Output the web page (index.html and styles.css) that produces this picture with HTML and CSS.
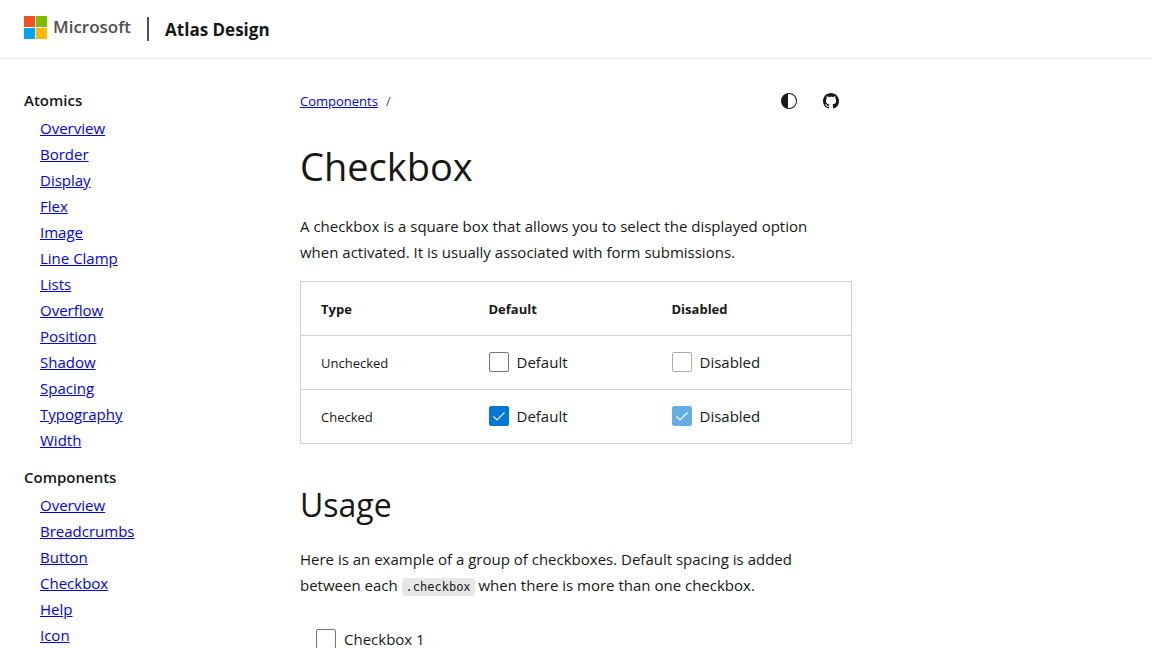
FILE: index.html
```html
<!DOCTYPE html>
<html lang="en">
<head>
<meta charset="utf-8">
<meta name="viewport" content="width=device-width, initial-scale=1">
<title>Checkbox - Atlas Design</title>
<link rel="stylesheet" href="styles.css">
</head>
<body>
<header class="site-header">
  <a class="logo" href="#">
    <svg class="logo-mark" viewBox="0 0 23 23" aria-hidden="true">
      <path fill="#f25022" d="M0 0h11v11H0z"/>
      <path fill="#80ba01" d="M12 0h11v11H12z"/>
      <path fill="#02a4ef" d="M0 12h11v11H0z"/>
      <path fill="#ffb902" d="M12 12h11v11H12z"/>
    </svg>
    <span class="logo-name">Microsoft</span>
  </a>
  <span class="divider"></span>
  <a class="site-name" href="#">Atlas Design</a>
</header>
<div class="layout">
  <nav class="sidebar" aria-label="Documentation">
    <section class="nav-group">
      <h2 class="nav-title">Atomics</h2>
      <ul class="nav-list">
        <li><a href="#">Overview</a></li>
        <li><a href="#">Border</a></li>
        <li><a href="#">Display</a></li>
        <li><a href="#">Flex</a></li>
        <li><a href="#">Image</a></li>
        <li><a href="#">Line Clamp</a></li>
        <li><a href="#">Lists</a></li>
        <li><a href="#">Overflow</a></li>
        <li><a href="#">Position</a></li>
        <li><a href="#">Shadow</a></li>
        <li><a href="#">Spacing</a></li>
        <li><a href="#">Typography</a></li>
        <li><a href="#">Width</a></li>
      </ul>
    </section>
    <section class="nav-group">
      <h2 class="nav-title">Components</h2>
      <ul class="nav-list">
        <li><a href="#">Overview</a></li>
        <li><a href="#">Breadcrumbs</a></li>
        <li><a href="#">Button</a></li>
        <li><a href="#">Checkbox</a></li>
        <li><a href="#">Help</a></li>
        <li><a href="#">Icon</a></li>
      </ul>
    </section>
  </nav>
  <main class="content">
    <div class="toolbar">
      <nav class="breadcrumbs" aria-label="Breadcrumb"><a href="#">Components</a><span class="slash">/</span></nav>
      <div class="actions">
        <button class="icon-button" type="button" aria-label="Change theme">
          <svg class="icon" viewBox="0 0 16 16" aria-hidden="true"><path fill="currentColor" fill-rule="evenodd" d="M8 0a8 8 0 1 0 0 16A8 8 0 0 0 8 0zm-1 1h1a7 7 0 0 1 0 14H7z"/></svg>
        </button>
        <a class="icon-button" href="#" aria-label="GitHub">
          <svg class="icon" viewBox="0 0 16 16" aria-hidden="true"><path fill="currentColor" d="M8 0C3.58 0 0 3.58 0 8c0 3.54 2.29 6.53 5.47 7.59.4.07.55-.17.55-.38 0-.19-.01-.82-.01-1.49-2.01.37-2.53-.49-2.69-.94-.09-.23-.48-.94-.82-1.13-.28-.15-.68-.52-.01-.53.63-.01 1.08.58 1.23.82.72 1.21 1.87.87 2.33.66.07-.52.28-.87.51-1.07-1.78-.2-3.64-.89-3.64-3.95 0-.87.31-1.59.82-2.15-.08-.2-.36-1.02.08-2.12 0 0 .67-.21 2.2.82.64-.18 1.32-.27 2-.27s1.36.09 2 .27c1.53-1.04 2.2-.82 2.2-.82.44 1.1.16 1.92.08 2.12.51.56.82 1.27.82 2.15 0 3.07-1.87 3.75-3.65 3.95.29.25.54.73.54 1.48 0 1.07-.01 1.93-.01 2.2 0 .21.15.46.55.38A8.01 8.01 0 0 0 16 8c0-4.42-3.58-8-8-8z"/></svg>
        </a>
      </div>
    </div>
    <h1 class="title">Checkbox</h1>
    <p class="text">A checkbox is a square box that allows you to select the displayed option when activated. It is usually associated with form submissions.</p>
    <table class="table">
      <colgroup><col class="col-type"><col class="col-default"><col></colgroup>
      <thead>
        <tr><th scope="col">Type</th><th scope="col">Default</th><th scope="col">Disabled</th></tr>
      </thead>
      <tbody>
        <tr>
          <td>Unchecked</td>
          <td><label class="checkbox"><input class="checkbox-input" type="checkbox"><span>Default</span></label></td>
          <td><label class="checkbox"><input class="checkbox-input" type="checkbox" disabled><span>Disabled</span></label></td>
        </tr>
        <tr>
          <td>Checked</td>
          <td><label class="checkbox"><input class="checkbox-input" type="checkbox" checked><span>Default</span></label></td>
          <td><label class="checkbox"><input class="checkbox-input" type="checkbox" checked disabled><span>Disabled</span></label></td>
        </tr>
      </tbody>
    </table>
    <h2 class="subtitle">Usage</h2>
    <p class="text">Here is an example of a group of checkboxes. Default spacing is added between each <code class="code">.checkbox</code> when there is more than one checkbox.</p>
    <div class="example">
      <label class="checkbox"><input class="checkbox-input" type="checkbox"><span>Checkbox 1</span></label>
    </div>
  </main>
</div>
</body>
</html>
```
FILE: styles.css
```css
* { box-sizing: border-box; }

body {
  margin: 0;
  background: #fff;
  color: #171717;
  font-family: "Open Sans", "Noto Sans", sans-serif;
  font-size: 15px;
  line-height: 26px;
}

a { color: #0000ee; }

.site-header {
  display: flex;
  align-items: center;
  gap: 16px;
  height: 59px;
  padding: 0 24px;
  border-bottom: 1px solid #e6e6e6;
}

.logo {
  display: flex;
  align-items: center;
  gap: 6px;
  padding-bottom: 4px;
  color: #505050;
  text-decoration: none;
}

.logo-mark { width: 23px; height: 23px; }

.logo-name { font-size: 17px; font-weight: 600; line-height: 24px; }

.divider { width: 2px; height: 24px; background: #505050; }

.site-name {
  padding-top: 2px;
  color: #171717;
  font-size: 17px;
  font-weight: 700;
  text-decoration: none;
}

.layout {
  display: grid;
  grid-template-columns: 252px minmax(0, 1fr) 252px;
  gap: 24px;
  padding: 24px;
}

.sidebar { padding-top: 4px; }

.nav-group { margin-bottom: 11px; }

.nav-title {
  margin: 0 0 2px;
  font-size: 15px;
  font-weight: 600;
}

.nav-list {
  margin: 0;
  padding-left: 16px;
  list-style: none;
}

.toolbar {
  display: flex;
  justify-content: space-between;
  align-items: center;
  height: 36px;
}

.breadcrumbs { font-size: 13px; }

.slash { margin-left: 8px; color: #505050; }

.actions { display: flex; }

.icon-button {
  display: flex;
  justify-content: center;
  align-items: center;
  width: 42px;
  height: 36px;
  padding: 0;
  border: 0;
  background: none;
  color: #171717;
}

.icon { width: 16px; height: 16px; }

.title {
  margin: 22px 0;
  font-size: 38px;
  font-weight: 400;
  line-height: 50px;
}

.text { margin: 0; padding-right: 16px; }

.table {
  width: 100%;
  margin-top: 16px;
  border: 1px solid #d2d2d2;
  border-collapse: collapse;
  table-layout: fixed;
  font-size: 13px;
}

.col-type { width: 168px; }
.col-default { width: 183px; }

.table th,
.table td {
  height: 54px;
  padding: 0 20px;
  border-bottom: 1px solid #d2d2d2;
  text-align: left;
}

.checkbox {
  display: flex;
  align-items: center;
  gap: 8px;
  padding-bottom: 2px;
  font-size: 15px;
}

.checkbox-input {
  width: 20px;
  height: 20px;
  margin: 0;
  border: 1px solid #757575;
  border-radius: 2px;
  background: #fff center / 18px 18px no-repeat;
  appearance: none;
}

.checkbox-input:checked {
  border-color: #0078d4;
  background-color: #0078d4;
  background-image: url("data:image/svg+xml,%3Csvg xmlns='http://www.w3.org/2000/svg' viewBox='0 0 18 18'%3E%3Cpath d='M3.5 9.5 7 13 14.5 5.5' fill='none' stroke='white' stroke-width='1.1'/%3E%3C/svg%3E");
}

.checkbox-input:disabled { opacity: 0.6; }

.subtitle {
  margin: 40px 0 20px;
  font-size: 32px;
  font-weight: 400;
  line-height: 42px;
}

.code {
  padding: 2px 4px;
  border-radius: 3px;
  background: #e6e6e6;
  font-family: "DejaVu Sans Mono", monospace;
  font-size: 12px;
  line-height: 16px;
}

.example { padding: 28px 16px; }
```
